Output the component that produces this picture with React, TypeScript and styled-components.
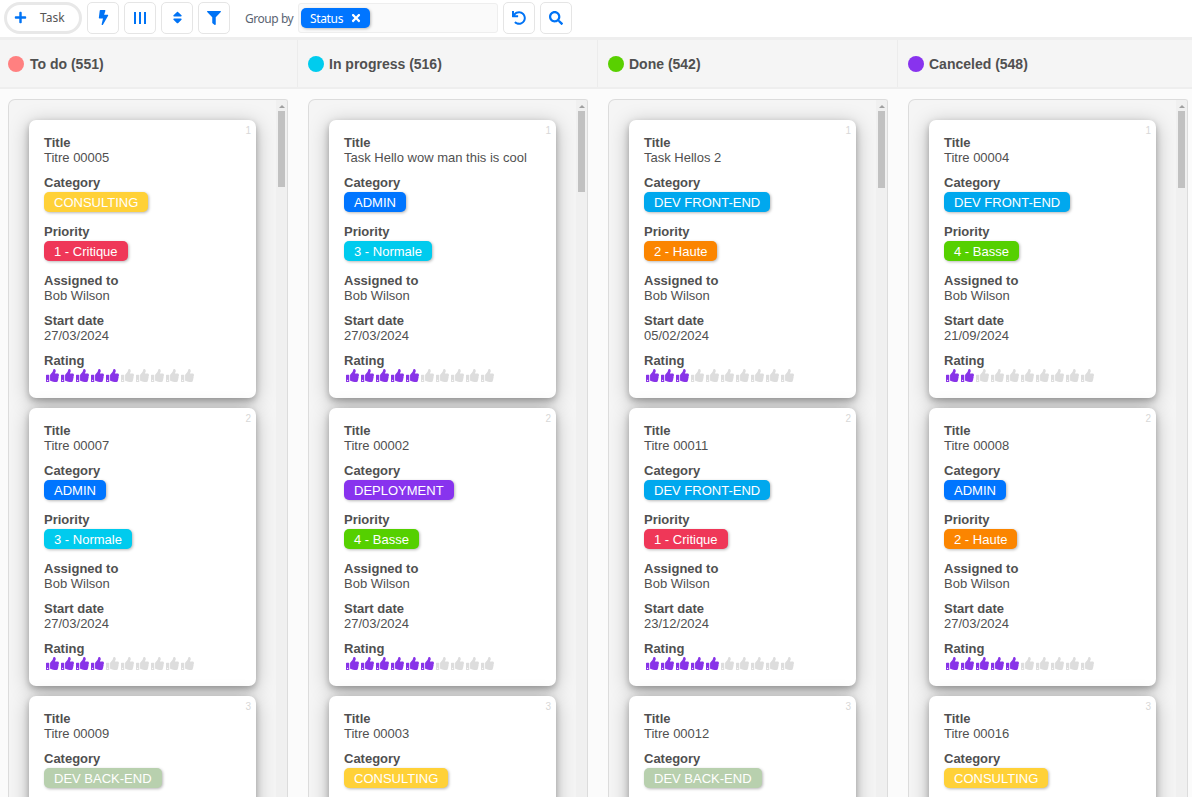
import React from "react";
import styled, { createGlobalStyle } from "styled-components";
import { FaBolt, FaFilter, FaPlus, FaSearch, FaSort, FaThumbsUp, FaTimes, FaUndo } from "react-icons/fa";

const GlobalStyle = createGlobalStyle`
  * { box-sizing: border-box; }
  html, body, #root { height: 100%; }
  body {
    margin: 0;
    overflow: hidden;
    background: #fbfbfb;
    color: #505050;
    font: 13px/15px "Liberation Sans", Arial, sans-serif;
  }
`;

const Page = styled.div`
  display: flex;
  flex-direction: column;
  width: 100%;
  height: 797px;
  overflow: hidden;
`;

const Toolbar = styled.header`
  display: flex;
  align-items: flex-start;
  gap: 5px;
  flex: none;
  height: 40px;
  padding: 2px 4px 0;
  background: #fff;
  border-bottom: 3px solid #eeeeee;
`;

const TaskButton = styled.button`
  display: flex;
  align-items: center;
  gap: 13px;
  width: 78px;
  height: 32px;
  padding: 0 0 1px 7px;
  border: 3px solid #e8e8e8;
  border-radius: 16px;
  background: #fff;
  color: #555;
  font: 12px "Noto Sans", sans-serif;
  svg { color: #0073f5; flex: none; }
`;

const IconButton = styled.button`
  display: flex;
  align-items: center;
  justify-content: center;
  width: 32px;
  height: 32px;
  padding: 0 0 1px;
  border: 1px solid #e5e5e5;
  border-radius: 5px;
  background: #fff;
  color: #0073f5;
`;

const Bars = styled.span`
  display: flex;
  justify-content: space-between;
  width: 12px;
  height: 12px;
`;

const Bar = styled.span`
  width: 2px;
  background: #0073f5;
`;

const GroupLabel = styled.span`
  width: 48px;
  margin: 0 0 0 10px;
  color: #5a6472;
  font: 12px/33px "Noto Sans", sans-serif;
  letter-spacing: -0.45px;
  white-space: nowrap;
`;

const GroupField = styled.div`
  display: flex;
  align-items: center;
  width: 200px;
  height: 30px;
  margin-top: 1px;
  padding-left: 2px;
  border: 1px solid #eee;
  border-radius: 3px;
  background: #fafafa;
`;

const Chip = styled.span`
  display: flex;
  align-items: center;
  gap: 7px;
  width: 69px;
  height: 20px;
  padding-left: 9px;
  border-radius: 5px;
  background: #0075ff;
  color: #fff;
  box-shadow: 1px 1px 3px rgba(0, 0, 0, 0.25);
  font: 12px "Noto Sans", sans-serif;
  letter-spacing: -0.35px;
  svg { margin-bottom: 1px; }
`;

const Headings = styled.div`
  display: flex;
  flex: none;
  height: 49px;
  background: #f5f5f5;
  border-bottom: 2px solid #eeeeee;
`;

const Heading = styled.h2`
  display: flex;
  align-items: center;
  gap: 5px;
  flex: none;
  width: 300px;
  margin: 0;
  padding: 0 0 0 10px;
  border-right: 1px solid #ececec;
  font-size: 14px;
  line-height: 16px;
  &:first-child { width: 298px; padding-left: 8px; gap: 6px; }
  &:last-child { border-right: 0; }
`;

const Dot = styled.span<{ $color: string }>`
  width: 16px;
  height: 16px;
  border-radius: 50%;
  background: ${(p) => p.$color};
`;

const Board = styled.main`
  display: flex;
  flex: 1;
  min-height: 0;
  gap: 20px;
  padding: 10px 0 0 8px;
`;

const Column = styled.section`
  display: flex;
  flex: none;
  width: 280px;
  overflow: hidden;
  border: 1px solid #dcdcdc;
  border-bottom: 0;
  border-radius: 7px 3px 0 0;
  background: #f5f5f5;
`;

const Cards = styled.div`
  display: flex;
  flex-direction: column;
  flex: 1;
  gap: 10px;
  padding: 20px 20px 0;
  overflow: hidden;
`;

const Card = styled.article`
  position: relative;
  flex: none;
  width: 227px;
  height: 278px;
  padding: 15px;
  border-radius: 7px;
  background: #fff;
  box-shadow: 0 3px 6px rgba(0, 0, 0, 0.25), 0 4px 20px rgba(0, 0, 0, 0.26);
`;

const CardNumber = styled.span`
  position: absolute;
  top: 5px;
  right: 5px;
  color: #d8d8d8;
  font-size: 10px;
  line-height: 12px;
`;

const Field = styled.div<{ $tagged?: boolean }>`
  display: flex;
  flex-direction: column;
  align-items: flex-start;
  gap: ${(p) => (p.$tagged ? 2 : 0)}px;
  margin-bottom: ${(p) => (p.$tagged ? 12 : 10)}px;
  white-space: nowrap;
`;

const Tag = styled.span<{ $color: string }>`
  height: 20px;
  padding: 0 10px;
  border-radius: 5px;
  background: ${(p) => p.$color};
  box-shadow: 1px 1px 3px rgba(0, 0, 0, 0.28);
  color: #fff;
  line-height: 21px;
`;

const Thumbs = styled.div`
  display: flex;
  gap: 2px;
  padding: 1px 0 0 2px;
`;

const Thumb = styled(FaThumbsUp)<{ $on: boolean }>`
  width: 13px;
  height: 13px;
  color: ${(p) => (p.$on ? "#8833e8" : "#dddddd")};
`;

const Scrollbar = styled.div`
  display: flex;
  flex-direction: column;
  align-items: center;
  flex: none;
  width: 11px;
  background: #f0f0f0;
`;

const ScrollArrow = styled.span`
  width: 0;
  height: 0;
  margin: 5px 0 3px;
  border: 3px solid transparent;
  border-top: 0;
  border-bottom-color: #a0a0a0;
`;

const ScrollThumb = styled.span<{ $length: number }>`
  width: 7px;
  height: ${(p) => p.$length}px;
  background: #c1c1c1;
`;

const tagColors: Record<string, string> = {
  CONSULTING: "#ffd138",
  ADMIN: "#0075ff",
  DEPLOYMENT: "#8833ee",
  "DEV FRONT-END": "#00a8ee",
  "DEV BACK-END": "#b8d0ae",
  "1 - Critique": "#ef3758",
  "2 - Haute": "#fb8500",
  "3 - Normale": "#00cbee",
  "4 - Basse": "#55d000",
};

interface Task {
  title: string;
  category: string;
  details?: { priority: string; assignee: string; start: string; rating: number };
}

const task = (title: string, category: string, priority?: string, start = "", rating = 0): Task => ({
  title,
  category,
  details: priority ? { priority, assignee: "Bob Wilson", start, rating } : undefined,
});

const columns: { name: string; color: string; thumb: number; tasks: Task[] }[] = [
  {
    name: "To do (551)", color: "#ff8080", thumb: 76,
    tasks: [
      task("Titre 00005", "CONSULTING", "1 - Critique", "27/03/2024", 5),
      task("Titre 00007", "ADMIN", "3 - Normale", "27/03/2024", 4),
      task("Titre 00009", "DEV BACK-END"),
    ],
  },
  {
    name: "In progress (516)", color: "#00ccee", thumb: 81,
    tasks: [
      task("Task Hello wow man this is cool", "ADMIN", "3 - Normale", "27/03/2024", 5),
      task("Titre 00002", "DEPLOYMENT", "4 - Basse", "27/03/2024", 6),
      task("Titre 00003", "CONSULTING"),
    ],
  },
  {
    name: "Done (542)", color: "#59d000", thumb: 77,
    tasks: [
      task("Task Hellos 2", "DEV FRONT-END", "2 - Haute", "05/02/2024", 3),
      task("Titre 00011", "DEV FRONT-END", "1 - Critique", "23/12/2024", 5),
      task("Titre 00012", "DEV BACK-END"),
    ],
  },
  {
    name: "Canceled (548)", color: "#8833ee", thumb: 77,
    tasks: [
      task("Titre 00004", "DEV FRONT-END", "4 - Basse", "21/09/2024", 2),
      task("Titre 00008", "ADMIN", "2 - Haute", "27/03/2024", 5),
      task("Titre 00016", "CONSULTING"),
    ],
  },
];

function TaskCard({ item, index }: { item: Task; index: number }) {
  const { title, category, details } = item;
  return (
    <Card>
      <CardNumber>{index}</CardNumber>
      <Field><b>Title</b><span>{title}</span></Field>
      <Field $tagged><b>Category</b><Tag $color={tagColors[category]}>{category}</Tag></Field>
      {details && (
        <>
          <Field $tagged>
            <b>Priority</b>
            <Tag $color={tagColors[details.priority]}>{details.priority}</Tag>
          </Field>
          <Field><b>Assigned to</b><span>{details.assignee}</span></Field>
          <Field><b>Start date</b><span>{details.start}</span></Field>
          <Field>
            <b>Rating</b>
            <Thumbs>
              {Array.from({ length: 10 }, (_, i) => <Thumb key={i} $on={i < details.rating} />)}
            </Thumbs>
          </Field>
        </>
      )}
    </Card>
  );
}

export default function App() {
  return (
    <Page>
      <GlobalStyle />
      <Toolbar>
        <TaskButton><FaPlus size={13} />Task</TaskButton>
        <IconButton aria-label="Actions"><FaBolt size={15} /></IconButton>
        <IconButton aria-label="Columns"><Bars><Bar /><Bar /><Bar /></Bars></IconButton>
        <IconButton aria-label="Sort"><FaSort size={15} /></IconButton>
        <IconButton aria-label="Filter"><FaFilter size={14} /></IconButton>
        <GroupLabel>Group by</GroupLabel>
        <GroupField><Chip>Status<FaTimes size={12} /></Chip></GroupField>
        <IconButton aria-label="Reset"><FaUndo size={14} /></IconButton>
        <IconButton aria-label="Search"><FaSearch size={14} /></IconButton>
      </Toolbar>
      <Headings>
        {columns.map((c) => <Heading key={c.name}><Dot $color={c.color} />{c.name}</Heading>)}
      </Headings>
      <Board>
        {columns.map((c) => (
          <Column key={c.name}>
            <Cards>
              {c.tasks.map((t, i) => <TaskCard key={t.title} item={t} index={i + 1} />)}
            </Cards>
            <Scrollbar><ScrollArrow /><ScrollThumb $length={c.thumb} /></Scrollbar>
          </Column>
        ))}
      </Board>
    </Page>
  );
}
